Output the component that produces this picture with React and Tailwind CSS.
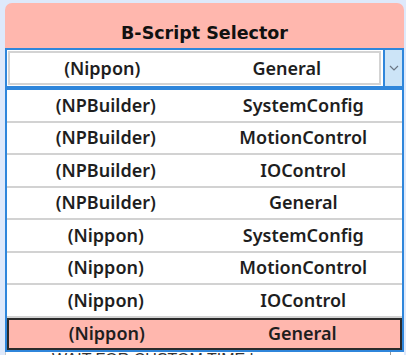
import { useState } from 'react';

const scripts = [
  { vendor: '(NPBuilder)', name: 'SystemConfig' },
  { vendor: '(NPBuilder)', name: 'MotionControl' },
  { vendor: '(NPBuilder)', name: 'IOControl' },
  { vendor: '(NPBuilder)', name: 'General' },
  { vendor: '(Nippon)', name: 'SystemConfig' },
  { vendor: '(Nippon)', name: 'MotionControl' },
  { vendor: '(Nippon)', name: 'IOControl' },
  { vendor: '(Nippon)', name: 'General' },
];

const App = () => {
  const [selected, setSelected] = useState(7);
  const current = scripts[selected];

  return (
    <div className="relative w-[406px] h-[355px] overflow-hidden bg-[#dee9fb] pt-[3px] pl-[5px] pr-[2px] font-['Noto_Sans',sans-serif] text-[#1e1e1e]">
      <div className="rounded-t-[7px] bg-[#ffb7ae]">
        {/* Title */}
        <div className="h-[45px] flex items-end justify-center pb-[6px]">
          <h1 className="font-['DejaVu_Sans',sans-serif] font-bold text-[17.5px] leading-none text-[#111]">
            B-Script Selector
          </h1>
        </div>

        {/* Combo box */}
        <div className="flex h-[40px] border-2 border-[#2f86db] bg-white">
          <div className="flex-1 p-px pr-[2px]">
            <div className="h-full flex items-center border-2 border-[#d3d3d3] text-[18px] font-semibold">
              <span className="w-1/2 text-center">{current.vendor}</span>
              <span className="w-1/2 text-center">{current.name}</span>
            </div>
          </div>
          <button className="w-[19px] flex items-center justify-center bg-[#cce4f7] border-l-2 border-[#2f86db]">
            <svg width="10" height="6" viewBox="0 0 10 6" fill="none" stroke="#6b7785" strokeWidth="1.2">
              <path d="M1 1l4 4 4-4" />
            </svg>
          </button>
        </div>
      </div>

      {/* Script file list behind the dropdown */}
      <div className="h-[270px] bg-white border-l border-[#c9c9c9] flex flex-col justify-end">
        <div className="h-[7px] flex items-start overflow-hidden">
          <span className="pl-[46px] flex-1 whitespace-nowrap text-[16px] leading-[18px] font-['Liberation_Sans',sans-serif] text-[#333]">
            WAIT FOR CUSTOM TIME.bsc
          </span>
          <span className="w-px h-full bg-[#9c9c9c] mr-[13px]" />
        </div>
      </div>

      {/* Open dropdown */}
      <ul className="absolute top-[88px] left-[5px] w-[399px] border-2 border-[#2f86db] bg-white text-[18px] font-semibold">
        {scripts.map((s, i) => (
          <li
            key={i}
            onClick={() => setSelected(i)}
            className={
              i === selected
                ? 'h-[32px] flex items-center bg-[#ffb7ae] border-2 border-[#2b2b2b]'
                : 'h-[32.5px] flex items-center border-b-2 border-[#d2d2d2]'
            }
          >
            <span className="w-1/2 text-center">{s.vendor}</span>
            <span className="w-1/2 text-center">{s.name}</span>
          </li>
        ))}
      </ul>
    </div>
  );
};

export default App;
